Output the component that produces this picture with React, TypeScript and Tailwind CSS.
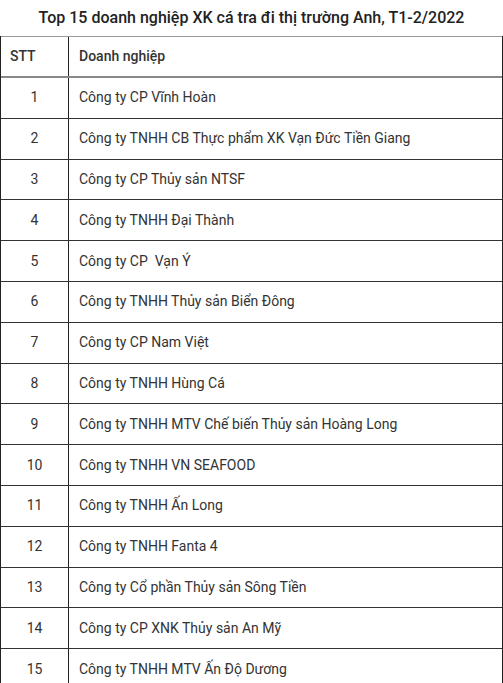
import React from 'react'

const rows = [
  'Công ty CP Vĩnh Hoàn',
  'Công ty TNHH CB Thực phẩm XK Vạn Đức Tiền Giang',
  'Công ty CP Thủy sản NTSF',
  'Công ty TNHH Đại Thành',
  'Công ty CP  Vạn Ý',
  'Công ty TNHH Thủy sản Biển Đông',
  'Công ty CP Nam Việt',
  'Công ty TNHH Hùng Cá',
  'Công ty TNHH MTV Chế biến Thủy sản Hoàng Long',
  'Công ty TNHH VN SEAFOOD',
  'Công ty TNHH Ấn Long',
  'Công ty TNHH Fanta 4',
  'Công ty Cổ phần Thủy sản Sông Tiền',
  'Công ty CP XNK Thủy sản An Mỹ',
  'Công ty TNHH MTV Ấn Độ Dương',
]

export default function App() {
  return (
    <div className="w-[503px] h-[683px] overflow-hidden bg-white text-[#333] font-['Roboto',sans-serif]">
      <h2 className="h-[36px] pt-[7px] text-center text-[16px] font-medium text-[#222] leading-[22px]">
        Top 15 doanh nghiệp XK cá tra đi thị trường Anh, T1-2/2022
      </h2>
      <div className="border-l border-r border-[#222] text-[14px]">
        <div className="flex h-[42px] border-t border-t-[#999] border-b-2 border-b-[#888]">
          <div className="w-[68px] shrink-0 border-r border-[#222] flex items-center pl-[9px] font-medium">STT</div>
          <div className="flex-1 flex items-center pl-[10px] font-medium">Doanh nghiệp</div>
        </div>
        {rows.map((name, i) => (
          <div key={i} className="flex h-[40.8px] border-b border-[#333]">
            <div className="w-[68px] shrink-0 border-r border-[#222] flex items-center justify-center">{i + 1}</div>
            <div className="flex-1 flex items-center pl-[10px] whitespace-pre">{name}</div>
          </div>
        ))}
      </div>
    </div>
  )
}
